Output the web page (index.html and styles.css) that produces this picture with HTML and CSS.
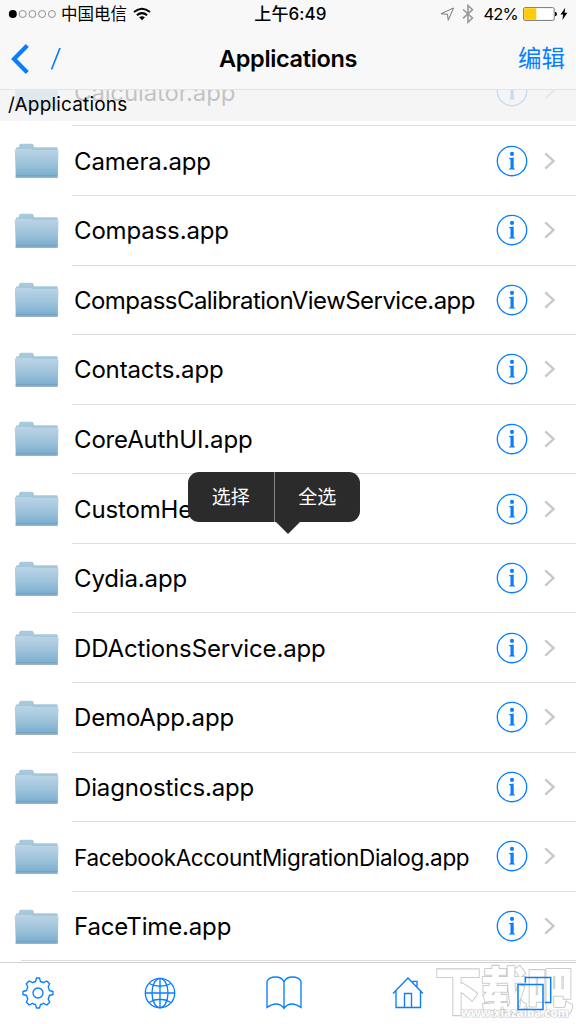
FILE: index.html
```html
<!DOCTYPE html>
<html lang="zh-CN">
<head>
<meta charset="utf-8">
<title>Applications</title>
<link rel="stylesheet" href="styles.css">
</head>
<body>
<svg class="defs" aria-hidden="true">
  <defs>
    <linearGradient id="front" x1="0" y1="0" x2="0" y2="1"><stop offset="0" stop-color="#bcd4e5"/><stop offset=".55" stop-color="#9cc2db"/><stop offset="1" stop-color="#78acce"/></linearGradient>
    <linearGradient id="back" x1="0" y1="0" x2="0" y2="1"><stop offset="0" stop-color="#a9cbdd"/><stop offset="1" stop-color="#86b2cd"/></linearGradient>
  </defs>
  <symbol id="folder" viewBox="0 0 46 36">
    <path d="M2 8V4.500H4.500L5.500 1.500Q6 .7 7 .7H17.500Q19 .7 19.500 2L20.200 4.200H42.500Q43.700 4.200 43.700 5.500V33H2Z" fill="url(#back)"/>
    <path d="M1.500 34.200H43.800" stroke="#7a8c9c" stroke-width="1"/>
    <path d="M.8 7.500Q.5 6 2 6H16Q18 6 19.500 7H43.300Q44.700 7 44.500 8.500L43.500 33.700H1.800Z" fill="url(#front)"/>
    <path d="M1.600 32.900H43.600" stroke="#689fc5" stroke-width="1"/>
  </symbol>
  <symbol id="info" viewBox="0 0 32 32">
    <circle cx="16" cy="16" r="14.700" fill="none" stroke="#087eff" stroke-width="1.350"/>
    <circle cx="16" cy="8.900" r="2.050" fill="#087eff"/>
    <path d="M13 13.300L17.700 12.600V22.700Q17.700 23.500 19 23.700V24.400H13V23.700Q14.500 23.500 14.500 22.700V14.700Q14.500 14 13 13.900Z" fill="#087eff"/>
  </symbol>
  <symbol id="chevron" viewBox="0 0 12 18"><path d="M1.300 1.300L9.500 9L1.300 16.700" fill="none" stroke="#c7c7cc" stroke-width="2.400"/></symbol>
</svg>
<div class="screen">
  <header class="top">
    <div class="status">
      <div class="carrier">
        <svg width="49" height="10" viewBox="0 0 49 10"><circle cx="4.800" cy="5" r="4"/><g fill="none" stroke="#777" stroke-width=".8"><circle cx="14.700" cy="5" r="3.500"/><circle cx="24.400" cy="5" r="3.500"/><circle cx="34.100" cy="5" r="3.500"/><circle cx="43.900" cy="5" r="3.500"/></g></svg>
        <span class="carrier-name">中国电信</span>
        <svg width="18" height="14" viewBox="0 0 18 14"><g fill="none" stroke="#000" stroke-width="2"><path d="M1 5.100Q9-1.700 17 5.100"/><path d="M3.900 8.300Q9 3.900 14.100 8.300"/></g><path d="M6.100 10.300Q9 8 11.900 10.300L9 13.200Z"/></svg>
      </div>
      <span class="time">上午6:49</span>
      <div class="power">
        <svg width="15" height="15" viewBox="0 0 15 15"><path d="M1 6.800L13.500 1L8.200 13.300L7.500 7.300Z" fill="none" stroke="#777" stroke-width="1"/></svg>
        <svg class="bluetooth" width="12" height="20" viewBox="0 0 12 20"><path d="M1 5.500L10.500 14L6 18.200V1.500L10.500 5.700L1 14.300" fill="none" stroke="#999" stroke-width="1.600"/></svg>
        <span class="percent">42%</span>
        <svg class="battery" width="34" height="14" viewBox="0 0 34 14"><rect x=".6" y=".6" width="30.600" height="12.800" rx="1.500" fill="#fff" stroke="#777"/><path d="M1.200 1.200H13.300V12.800H1.200Z" fill="#ffcc0a"/><path d="M32 4.700Q34 5 34 7T32 9.300Z"/></svg>
        <svg width="8" height="14" viewBox="0 0 8 14"><path d="M5.200.8L.5 7.500H3.200L2.400 13L7.400 5.800H4.600Z"/></svg>
      </div>
    </div>
    <nav class="nav">
      <div class="back"><svg width="18" height="30" viewBox="0 0 18 30"><path d="M16.300 1.500L3 15L16.300 28.500" fill="none" stroke="#087eff" stroke-width="4.200"/></svg><svg class="slash" width="12" height="24" viewBox="0 0 12 24"><path d="M1.500 22.500L10 1" stroke="#087eff" stroke-width="1.700"/></svg></div>
      <h1 class="title">Applications</h1>
      <span class="edit">编辑</span>
    </nav>
  </header>
  <main class="content">
    <ul class="list">
      <li class="row"><svg class="folder"><use href="#folder"/></svg><div class="cell"><span class="name first">Calculator.app</span><svg class="info"><use href="#info"/></svg><svg class="chevron"><use href="#chevron"/></svg></div></li>
      <li class="row"><svg class="folder"><use href="#folder"/></svg><div class="cell"><span class="name">Camera.app</span><svg class="info"><use href="#info"/></svg><svg class="chevron"><use href="#chevron"/></svg></div></li>
      <li class="row"><svg class="folder"><use href="#folder"/></svg><div class="cell"><span class="name">Compass.app</span><svg class="info"><use href="#info"/></svg><svg class="chevron"><use href="#chevron"/></svg></div></li>
      <li class="row"><svg class="folder"><use href="#folder"/></svg><div class="cell"><span class="name long">CompassCalibrationViewService.app</span><svg class="info"><use href="#info"/></svg><svg class="chevron"><use href="#chevron"/></svg></div></li>
      <li class="row"><svg class="folder"><use href="#folder"/></svg><div class="cell"><span class="name">Contacts.app</span><svg class="info"><use href="#info"/></svg><svg class="chevron"><use href="#chevron"/></svg></div></li>
      <li class="row"><svg class="folder"><use href="#folder"/></svg><div class="cell"><span class="name">CoreAuthUI.app</span><svg class="info"><use href="#info"/></svg><svg class="chevron"><use href="#chevron"/></svg></div></li>
      <li class="row"><svg class="folder"><use href="#folder"/></svg><div class="cell"><span class="name">CustomHe</span><svg class="info"><use href="#info"/></svg><svg class="chevron"><use href="#chevron"/></svg></div></li>
      <li class="row"><svg class="folder"><use href="#folder"/></svg><div class="cell"><span class="name">Cydia.app</span><svg class="info"><use href="#info"/></svg><svg class="chevron"><use href="#chevron"/></svg></div></li>
      <li class="row"><svg class="folder"><use href="#folder"/></svg><div class="cell"><span class="name">DDActionsService.app</span><svg class="info"><use href="#info"/></svg><svg class="chevron"><use href="#chevron"/></svg></div></li>
      <li class="row"><svg class="folder"><use href="#folder"/></svg><div class="cell"><span class="name">DemoApp.app</span><svg class="info"><use href="#info"/></svg><svg class="chevron"><use href="#chevron"/></svg></div></li>
      <li class="row"><svg class="folder"><use href="#folder"/></svg><div class="cell"><span class="name">Diagnostics.app</span><svg class="info"><use href="#info"/></svg><svg class="chevron"><use href="#chevron"/></svg></div></li>
      <li class="row"><svg class="folder"><use href="#folder"/></svg><div class="cell"><span class="name compact">FacebookAccountMigrationDialog.app</span><svg class="info"><use href="#info"/></svg><svg class="chevron"><use href="#chevron"/></svg></div></li>
      <li class="row last"><svg class="folder"><use href="#folder"/></svg><div class="cell"><span class="name">FaceTime.app</span><svg class="info"><use href="#info"/></svg><svg class="chevron"><use href="#chevron"/></svg></div></li>
    </ul>
    <div class="path">/Applications</div>
  </main>
  <footer class="tabs">
    <svg class="tab" width="32" height="32" viewBox="0 0 32 32"><path d="M13.500 4.500L14.500 1H17.500L18.500 4.500Q20 5 21.500 5.700L24.800 4L27.600 6.800L26.200 10Q27 11.500 27.400 13.500L31 14.500V17.500L27.400 18.500Q27 20.500 26.200 22L27.700 25.200L24.900 28L21.500 26.300Q20 27 18.500 27.500L17.500 31H14.500L13.500 27.500Q12 27 10.500 26.300L7.200 28L4.400 25.200L5.800 22Q5 20.500 4.600 18.500L1 17.500V14.500L4.600 13.500Q5 11.500 5.800 10L4.300 6.800L7.100 4L10.500 5.700Q12 5 13.500 4.500Z" stroke-linejoin="round"/><circle cx="16" cy="16" r="5"/></svg>
    <svg class="tab globe" width="32" height="32" viewBox="0 0 32 32"><circle cx="16" cy="16" r="14.700"/><ellipse cx="16" cy="16" rx="8" ry="14.700"/><path d="M16 1V31M1 16H31M5 6.500Q16 12 27 6.500M5 25.500Q16 19 27 25.500"/></svg>
    <svg class="tab book" width="36" height="34" viewBox="0 0 36 34"><path d="M18 6Q16 1 9.500 1Q3 1 1 5.500V31.500Q6 28 10 28Q15 28 18 32.500Q21 28 26 28Q30 28 35 31.500V5.500Q33 1 26.500 1Q20 1 18 6V32"/></svg>
    <svg class="tab home" width="32" height="32" viewBox="0 0 32 32"><path d="M1 16.500L16 1L31 16.500M4 14V30.500H28.500V14M12.500 30V16.500H19.500V30M21 6V4.300H25V10"/></svg>
    <svg class="tab windows" width="36" height="36" viewBox="0 0 36 36"><path d="M2 9.500H27V34.500H2ZM9.300 7.500V2.500H34.700V27.500H29" stroke-width="1.500"/></svg>
  </footer>
  <div class="menu"><span class="menu-item">选择</span><span class="menu-item">全选</span></div>
  <div class="watermark"><span class="mark">下载吧</span><span class="site">www.xiazaiba.com</span></div>
</div>
</body>
</html>
```
FILE: styles.css
```css
* { box-sizing: border-box; }
body { margin: 0; background: #fff; color: #000; font-family: Inter, "Noto Sans CJK SC", sans-serif; }
svg { display: block; flex: none; }
.defs { position: absolute; width: 0; height: 0; }
.screen { position: relative; width: 576px; height: 1024px; overflow: hidden; display: flex; flex-direction: column; }
.top { height: 89px; flex: none; background: #f8f8f8; }
.status { height: 28px; display: grid; grid-template-columns: 1fr auto 1fr; align-items: center; padding: 0 8px; font-size: 17px; line-height: 28px; }
.carrier { display: flex; align-items: center; gap: 4px; }
.carrier-name { font-size: 16.500px; height: 28px; }
.carrier svg:last-child { margin-left: 2px; }
.time { font-weight: 500; padding-left: 5px; letter-spacing: .1px; }
.power { display: flex; align-items: center; justify-content: flex-end; }
.bluetooth { margin-left: 7px; }
.percent { margin-left: 9px; font-size: 16.500px; letter-spacing: -.8px; }
.battery { margin: 0 3px 0 5px; }
.nav { height: 61px; display: grid; grid-template-columns: 1fr auto 1fr; align-items: center; padding: 0 11px; }
.back { display: flex; align-items: center; gap: 21px; }
.title { margin: 0; font-size: 23.500px; font-weight: 600; line-height: 30px; letter-spacing: -.35px; }
.edit { justify-self: end; color: #087eff; font-size: 23.500px; line-height: 30px; }
.content { height: 873px; flex: none; overflow: hidden; display: grid; grid-template-columns: 576px; }
.list { grid-area: 1 / 1; margin: -32.200px 0 0; padding: 0; list-style: none; }
.row { height: 69.580px; display: flex; align-items: center; padding-left: 13.500px; }
.folder { width: 46px; height: 36px; }
.cell { height: 100%; flex: 1; margin-left: 12.500px; padding: 0 20px 0 2px; display: flex; align-items: center; border-bottom: 1px solid #dedee0; }
.name { flex: 1; min-width: 0; padding-top: 2px; white-space: nowrap; font-size: 24px; line-height: 30px; letter-spacing: -.15px; }
.first { padding-top: 3px; }
.long { letter-spacing: -.54px; }
.compact { font-size: 22.500px; letter-spacing: -.35px; padding-top: 3px; }
.info { width: 32px; height: 32px; }
.chevron { width: 12px; height: 18px; margin-left: 16px; }
.last { background: linear-gradient(#dedee0, #dedee0) right bottom / calc(100% - 21px) 1px no-repeat; }
.path { grid-area: 1 / 1; z-index: 1; height: 32px; padding-left: 8px; background: rgba(242, 242, 242, .8); border-top: 1px solid #e4e4e4; font-size: 19px; line-height: 30px; letter-spacing: .18px; }
.tabs { height: 62px; flex: none; border-top: 1px solid #d0d0d0; display: flex; align-items: center; padding: 0 22px 2px 22px; }
.tab { fill: none; stroke: #087eff; stroke-width: 1.350; }
.globe { margin-left: 90px; }
.book { margin-left: 90px; }
.home { margin-left: 90px; }
.windows { position: relative; z-index: 2; margin-left: 92px; }
.menu { position: absolute; left: 188px; top: 472px; width: 172px; height: 50px; display: flex; border-radius: 11px; background: #2b2b2b; color: #fff; font-size: 19px; line-height: 51px; text-align: center; }
.menu::after { content: ""; position: absolute; left: 87px; top: 49px; width: 26px; height: 13px; background: #2b2b2b; clip-path: polygon(0 0, 100% 0, 50% 100%); }
.menu-item { flex: 1; }
.menu-item:first-child { border-right: 1px solid #888; }
.watermark { position: absolute; z-index: 1; left: 435px; top: 960px; width: 141px; height: 64px; color: #fff; white-space: nowrap; }
.mark { display: block; height: 45px; font: 900 46px/50px "Noto Sans CJK SC", sans-serif; -webkit-text-stroke: 2px #ccc; paint-order: stroke fill; transform: scaleY(1.120); transform-origin: top; }
.site { position: relative; display: block; padding-left: 26px; font: bold 11.500px/15px "Open Sans", sans-serif; -webkit-text-stroke: 1.200px #c8c8c8; paint-order: stroke fill; }
```
